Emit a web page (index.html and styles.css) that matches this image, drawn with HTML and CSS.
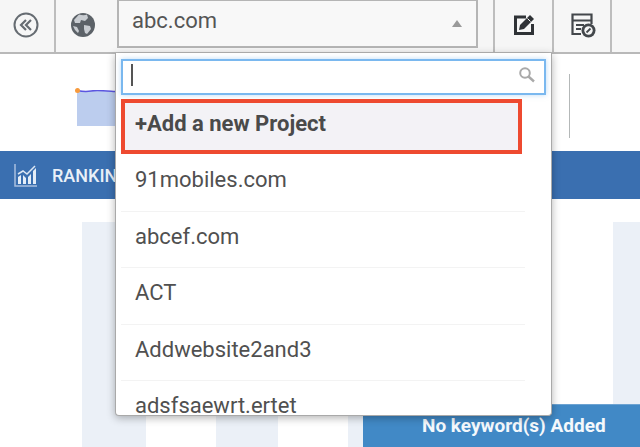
FILE: index.html
```html
<!DOCTYPE html>
<html lang="en">
<head>
  <meta charset="UTF-8" />
  <title>Projects</title>
  <link rel="stylesheet" href="styles.css">
</head>
<body>
  <div class="toolbar">
    <div class="tool tool-back">
      <svg width="28" height="28" viewBox="0 0 28 28" fill="none" stroke="#666c72">
        <circle cx="14" cy="14" r="11.5" stroke-width="2"/>
        <path d="M14 9l-5 5 5 5M19 9l-5 5 5 5" stroke-width="2.2"/>
      </svg>
    </div>
    <div class="tool tool-globe">
      <svg width="26" height="26" viewBox="0 0 26 26">
        <circle cx="13" cy="13" r="12" fill="#5c6268"/>
        <path d="M9 2.5c3 1 6 1 8 0l1 3.5-3 3-4-1-1 3-5 0-1-3zM14 13l6 1 1 3-4 5-2-1-1-4zM3 14l4 1 2 4-1 2-3-3z" fill="#c9cdd2"/>
      </svg>
    </div>
    <div class="select-cell">
      <div class="select-box">
        <span>abc.com</span>
        <span class="caret"></span>
      </div>
    </div>
    <div class="tool tool-edit">
      <svg width="24" height="24" viewBox="0 0 24 24" fill="none">
        <path d="M14 4H3.5v16.5H20.5V11" stroke="#2f3236" stroke-width="3"/>
        <path d="M7 17l1-5 10-10 4 4-10 10z" fill="#2f3236"/>
        <path d="M15.5 5.5l3 3" stroke="#f6f6f6"/>
      </svg>
    </div>
    <div class="tool tool-report">
      <svg width="26" height="26" viewBox="0 0 26 26" fill="none">
        <path d="M11 22H2.5V2.5h19V12" stroke="#43474b" stroke-width="2.2"/>
        <path d="M3 8.5h18M6 13h8M6 17h5" stroke="#43474b" stroke-width="2.2"/>
        <circle cx="18.5" cy="18.5" r="7" fill="#43474b"/>
        <circle cx="18.5" cy="18.5" r="4.2" fill="#f6f6f6"/>
        <path d="M16.5 20.5l4-4" stroke="#43474b" stroke-width="1.8"/>
      </svg>
    </div>
    <div class="tool tool-last"></div>
  </div>

  <div class="summary">
    <div class="spark">
      <svg width="38" height="36" viewBox="0 0 38 36">
        <rect x="0" y="1" width="38" height="35" fill="#bccdee"/>
        <path d="M0 0.5c5 1 9 1.5 14 0.5s10-0.5 24 0.5" fill="none" stroke="#5b55e0" stroke-width="1.5"/>
      </svg>
      <span class="spark-dot"></span>
    </div>
    <div class="summary-rule"></div>
  </div>

  <div class="ranking-bar">
    <svg width="24" height="24" viewBox="0 0 24 24" fill="none">
      <path d="M1 1v22h22" stroke="#a9c0de" stroke-width="1.5"/>
      <path d="M4 21v-7l3-2v9zM9 21v-9l3 3v6zM14 21v-7l3-3v10zM19 21V8l3-3v16z" fill="#e4edf7"/>
      <path d="M4 11l5-3 4 3 8-8" stroke="#dbe6f3" stroke-width="1.5"/>
    </svg>
    <span class="ranking-title">RANKINGS</span>
  </div>

  <div class="chart">
    <div class="col col-a"></div>
    <div class="col col-b"></div>
    <div class="col col-c"></div>
    <div class="col col-d"></div>
    <div class="no-data">No keyword(s) Added</div>
  </div>

  <div class="dropdown">
    <div class="search">
      <span class="cursor"></span>
      <svg width="18" height="18" viewBox="0 0 18 18" fill="none" stroke="#a9a9a9">
        <circle cx="7" cy="7" r="4.8" stroke-width="2"/>
        <path d="M10.5 10.5l5.5 5" stroke-width="2.4"/>
      </svg>
    </div>
    <div class="add-project">+Add a new Project</div>
    <ul class="project-list">
      <li>91mobiles.com</li>
      <li>abcef.com</li>
      <li>ACT</li>
      <li>Addwebsite2and3</li>
      <li>adsfsaewrt.ertet</li>
    </ul>
  </div>
</body>
</html>
```

FILE: styles.css
```css
html, body {
  margin: 0;
  padding: 0;
  height: 447px;
  overflow: hidden;
}

body {
  position: relative;
  background: #fff;
  font-family: 'Roboto', 'Liberation Sans', sans-serif;
  color: #4f4f4f;
}

/* Top toolbar */
.toolbar {
  display: flex;
  height: 52px;
  background: #f6f6f6;
  border-bottom: 2px solid #b9b9b9;
}

.tool {
  display: flex;
  align-items: center;
  justify-content: center;
  border-right: 2px solid #bdbdbd;
  box-sizing: border-box;
  padding-bottom: 2px;
}

.tool-back { width: 56px; padding-right: 2px; }
.tool-globe { width: 60px; padding-right: 6px; border-right: none; }
.tool-edit { width: 61px; border-right: 2px solid #bdbdbd; border-left: 2px solid #bdbdbd; }
.tool-report { width: 58px; padding-left: 2px; }
.tool-last { flex: 1; border-right: none; }

.select-cell {
  width: 377px;
  padding: 0 15px 0 1px;
  box-sizing: border-box;
}

.select-box {
  display: flex;
  align-items: center;
  justify-content: space-between;
  box-sizing: border-box;
  width: 361px;
  height: 48px;
  padding: 0 14px 6px 13px;
  border: 2px solid #b5b5b5;
  border-top-width: 1px;
  background: #f8f8f8;
  font-size: 22px;
  color: #555;
}

.caret {
  width: 0;
  height: 0;
  border-left: 5px solid transparent;
  border-right: 5px solid transparent;
  border-bottom: 7px solid #9a9a9a;
  margin-top: 6px;
}

/* Area under the toolbar */
.summary {
  display: flex;
  height: 97px;
  padding-left: 77px;
  padding-right: 70px;
  justify-content: space-between;
  box-sizing: border-box;
}

.spark {
  position: relative;
  margin-top: 36px;
  height: 36px;
}

.spark-dot {
  position: absolute;
  top: -2px;
  left: -2px;
  width: 5px;
  height: 5px;
  border-radius: 50%;
  background: #f79a3c;
}

.summary-rule {
  width: 1px;
  height: 64px;
  margin-top: 20px;
  background: #b4b8b8;
}

.ranking-bar {
  display: flex;
  align-items: center;
  gap: 14px;
  height: 48px;
  padding-left: 14px;
  background: #3a6fb0;
  color: #e9f0f8;
}

.ranking-title {
  font-size: 18px;
  font-weight: 500;
}

.chart {
  position: relative;
  display: flex;
  height: 248px;
  padding: 23px 0 0 82px;
  box-sizing: border-box;
}

.col {
  background: #ebf0f7;
  height: 100%;
}

.col-a { width: 64px; margin-right: 70px; }
.col-b { width: 62px; margin-right: 70px; }
.col-c { width: 64px; margin-right: 67px; }
.col-d { width: 64px; }

.chart::after {
  content: "";
  position: absolute;
  top: 23px;
  right: 0;
  bottom: 0;
  width: 27px;
  background: #ebf0f7;
}

.no-data {
  position: absolute;
  top: 205px;
  left: 363px;
  right: 0;
  bottom: 0;
  padding-left: 59px;
  background: #4189c6;
  border-top: 1px solid #6da3d2;
  color: #f4f8fc;
  font-size: 19px;
  font-weight: 700;
  line-height: 42px;
  z-index: 1;
}

/* Project dropdown */
.dropdown {
  position: absolute;
  top: 53px;
  left: 115px;
  width: 437px;
  height: 363px;
  box-sizing: border-box;
  padding: 6px 5px 0 5px;
  overflow: hidden;
  background: #fff;
  border: 1px solid #a9a9a9;
  border-top: none;
  border-radius: 0 0 4px 4px;
  box-shadow: 0 2px 8px rgba(0, 0, 0, 0.3);
  z-index: 2;
}

.search {
  display: flex;
  align-items: center;
  justify-content: space-between;
  box-sizing: border-box;
  height: 36px;
  padding: 0 8px 4px 8px;
  border: 2px solid #7ab8ef;
  box-shadow: 0 0 5px rgba(122, 184, 239, 0.5);
}

.cursor {
  width: 2px;
  height: 22px;
  background: #555;
}

.add-project {
  box-sizing: border-box;
  width: 401px;
  height: 55px;
  margin-top: 4px;
  padding-left: 10px;
  background: #f3f2f6;
  border: 4px solid #ee4a30;
  font-size: 22px;
  font-weight: 700;
  line-height: 41px;
  color: #4a4a4a;
}

.project-list {
  list-style: none;
  margin: 1px 0 0 0;
  padding: 0 21px 0 0;
}

.project-list li {
  box-sizing: border-box;
  height: 56.5px;
  padding: 15px 0 0 14px;
  border-bottom: 1px solid #f3f3f3;
  font-size: 22px;
  line-height: 19px;
  color: #505050;
}
```
